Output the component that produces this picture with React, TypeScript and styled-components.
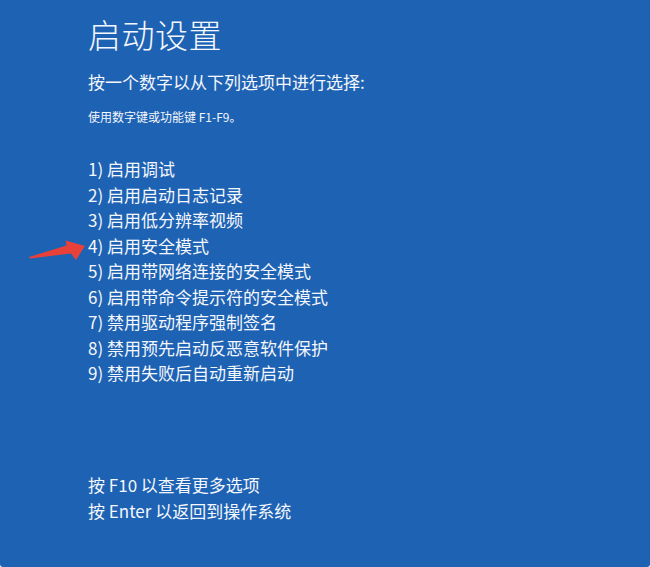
import { createGlobalStyle, styled } from 'styled-components'

const GlobalStyle = createGlobalStyle`
  html, body {
    margin: 0;
    padding: 0;
    background: #ffffff;
  }
  body {
    font-family: "Noto Sans CJK SC", "Noto Sans", sans-serif;
  }
`

const Screen = styled.main`
  box-sizing: border-box;
  display: flex;
  flex-direction: column;
  width: 650px;
  height: 567px;
  padding: 14px 0 43px 88px;
  background: #1e62b4;
  border-radius: 0 0 3px 3px;
  color: #f4f7fb;
  overflow: hidden;
`

const Title = styled.h1`
  margin: 0;
  font-size: 33px;
  line-height: 40px;
  font-weight: 300;
  letter-spacing: 0.5px;
`

const Prompt = styled.p`
  margin: 16px 0 0;
  font-size: 17px;
  line-height: 24px;
  font-weight: 400;
`

const Hint = styled.p`
  margin: 14px 0 0;
  font-size: 12px;
  line-height: 18px;
`

const OptionList = styled.ol`
  margin: 30px 0 0;
  padding: 0;
  list-style: none;
`

const Option = styled.li`
  position: relative;
  font-size: 17px;
  line-height: 25.5px;
`

const Arrow = styled.svg`
  position: absolute;
  left: -60px;
  top: 5px;
  width: 60px;
  height: 24px;
`

const Footer = styled.div`
  margin-top: auto;
  display: flex;
  flex-direction: column;
`

const FooterLine = styled.p`
  margin: 0;
  font-size: 17px;
  line-height: 26px;
`

const options = [
  '启用调试',
  '启用启动日志记录',
  '启用低分辨率视频',
  '启用安全模式',
  '启用带网络连接的安全模式',
  '启用带命令提示符的安全模式',
  '禁用驱动程序强制签名',
  '禁用预先启动反恶意软件保护',
  '禁用失败后自动重新启动',
]

export default function App() {
  return (
    <>
      <GlobalStyle />
      <Screen>
        <Title>启动设置</Title>
        <Prompt>按一个数字以从下列选项中进行选择:</Prompt>
        <Hint>使用数字键或功能键 F1-F9。</Hint>

        <OptionList>
          {options.map((label, i) => (
            <Option key={label}>
              {i === 3 && (
                <Arrow viewBox="28 238 60 24">
                  <polygon
                    points="29,257 66.5,245.5 65.5,240.5 85,246 76,260 71,253.5 30,258.5"
                    fill="#e8413a"
                  />
                </Arrow>
              )}
              {i + 1}) {label}
            </Option>
          ))}
        </OptionList>

        <Footer>
          <FooterLine>按 F10 以查看更多选项</FooterLine>
          <FooterLine>按 Enter 以返回到操作系统</FooterLine>
        </Footer>
      </Screen>
    </>
  )
}
